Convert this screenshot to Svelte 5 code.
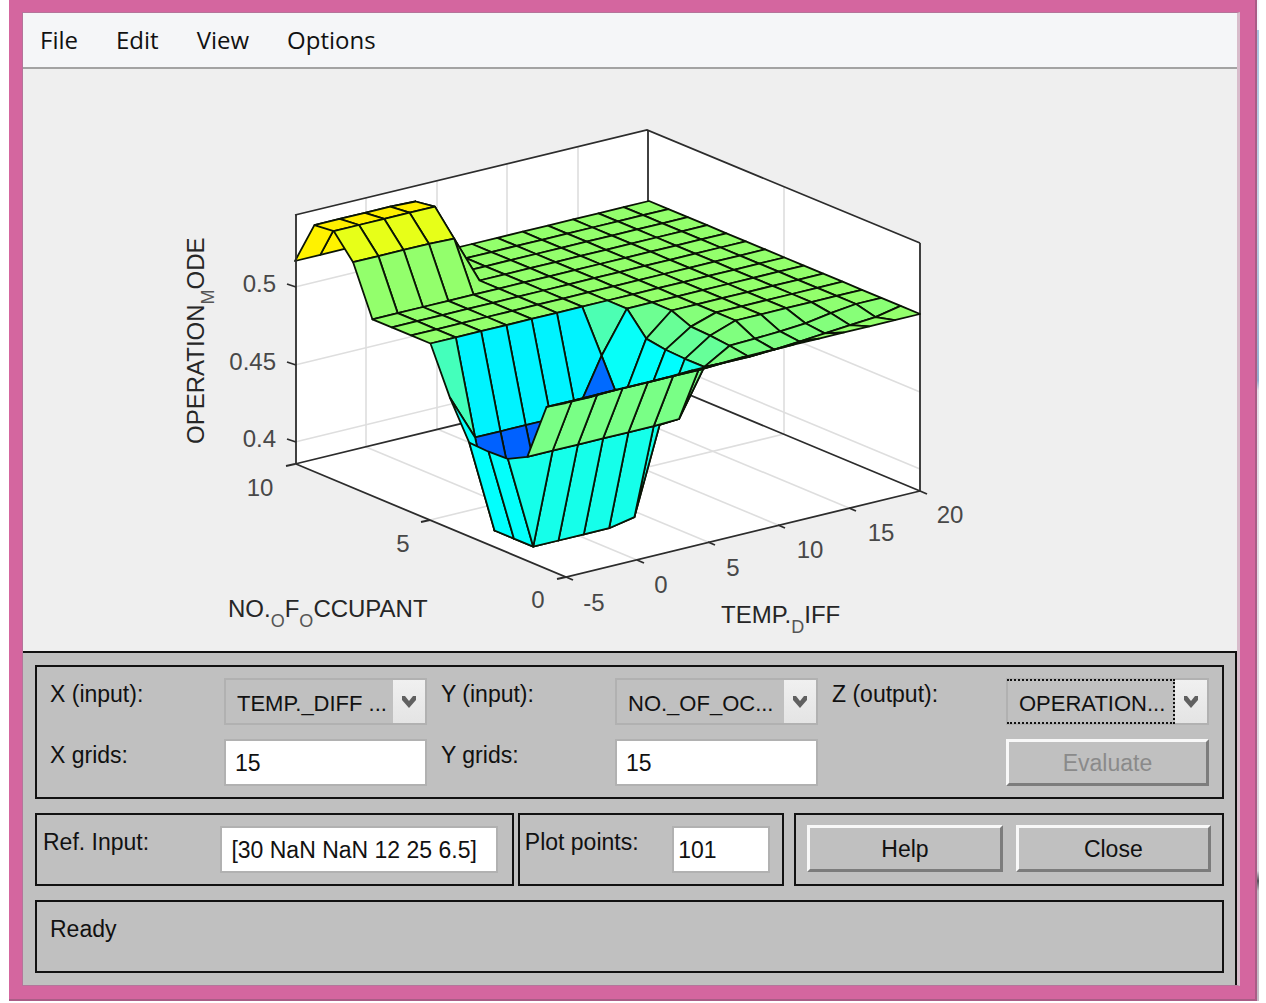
<script>
    // axes box corners in drawing units
    const front = [566, 578];
    const stepX = [354 / 14, -86 / 14];
    const stepY = [-271 / 14, -113 / 14];

    const flat = 177;
    const row = (start, rest = flat) =>
        Array.from({ length: 15 }, (_, j) => (j < start.length ? start[j] : rest));

    // surface heights, one row per occupant grid line, front to back
    const heights = [
        row([174, 174, 175, 175, 175, 176, 176]),
        row([162, 162, 162, 162, 162, 162, 162, 163, 163, 164, 166, 168, 170, 172]),
        row([104, 104, 104, 104, 104, 104, 105, 151, 166, 167, 168, 170, 174]),
        row([94, 0, 0, 0, 0, 5, 91, 151, 168]),
        row([93, 0, 0, 0, 0, 5, 93, 152, 169]),
        row([94, 0, 0, 0, 0, 5, 95, 155]),
        row([131, 85, 85, 85, 85, 85, 136]),
        row([]),
        row([]),
        row([]),
        row([]),
        row([226, 226, 226, 226, 225]),
        row([249, 249, 249, 249, 249]),
        row([247, 247, 247, 247, 246]),
        row([203, 203, 203, 203, 203]),
    ];

    function point(i, j) {
        const x = front[0] + stepX[0] * j + stepY[0] * i;
        const y = front[1] + stepX[1] * j + stepY[1] * i - heights[i][j];
        return `${x.toFixed(1)},${y.toFixed(1)}`;
    }

    function jet(h) {
        const v = 0.22 + 0.00169 * h;
        const channel = (c) =>
            Math.round(255 * Math.max(0, Math.min(1, 1.5 - Math.abs(4 * v - c))));
        return `rgb(${channel(3)}, ${channel(2)}, ${channel(1)})`;
    }

    // farthest faces first so the near ones cover them
    const faces = [];
    for (let depth = 26; depth >= 0; depth--) {
        for (let i = 13; i >= 0; i--) {
            const j = depth - i;
            if (j < 0 || j > 13) continue;
            faces.push({
                points: [point(i, j), point(i, j + 1), point(i + 1, j + 1), point(i + 1, j)].join(" "),
                fill: jet(heights[i][j]),
            });
        }
    }

    const xTicks = [
        { label: "-5", x: 566, y: 578, tx: 594, ty: 612 },
        { label: "0", x: 637, y: 561, tx: 661, ty: 594 },
        { label: "5", x: 708, y: 543, tx: 733, ty: 577 },
        { label: "10", x: 778, y: 526, tx: 810, ty: 559 },
        { label: "15", x: 849, y: 509, tx: 881, ty: 542 },
        { label: "20", x: 920, y: 492, tx: 950, ty: 524 },
    ];
    const yTicks = [
        { label: "0", x: 566, y: 578, tx: 538, ty: 609 },
        { label: "5", x: 430, y: 521, tx: 403, ty: 553 },
        { label: "10", x: 295, y: 465, tx: 260, ty: 497 },
    ];
    const zTicks = [
        { label: "0.4", y: 443 },
        { label: "0.45", y: 366 },
        { label: "0.5", y: 288 },
    ];

    const menus = ["File", "Edit", "View", "Options"];
    const chevron = "M1 1 H4 L8 6 L12 1 H15 V5 L8 13 L1 5 Z";

    let xGrids = "15";
    let yGrids = "15";
    let refInput = "[30 NaN NaN 12 25 6.5]";
    let plotPoints = "101";
</script>

<div class="window">
    <div class="client">
        <nav class="menubar">
            {#each menus as menu}
                <button class="menu">{menu}</button>
            {/each}
        </nav>

        <svg class="plot" viewBox="23 70 1214 582" role="img" aria-label="Surface plot">
            <polygon points="295,465 295,216 647,131 920,244 920,492 566,578" fill="#fff" />

            <g class="grid">
                {#each xTicks.slice(1, 5) as t}
                    <line x1={t.x} y1={t.y} x2={t.x - 271} y2={t.y - 113} />
                    <line x1={t.x - 271} y1={t.y - 113} x2={t.x - 271} y2={t.y - 362} />
                {/each}
                <line x1="430" y1="521" x2="784" y2="435" />
                <line x1="784" y1="435" x2="784" y2="188" />
                {#each zTicks as t}
                    <polyline points="295,{t.y} 649,{t.y - 86} 920,{t.y + 27}" />
                {/each}
            </g>

            <g class="edges">
                <polyline points="295,465 649,379 920,492" />
                <polyline points="295,216 647,131 920,244" />
                <line x1="648" y1="131" x2="648" y2="379" />
                <line x1="920" y1="244" x2="920" y2="492" />
            </g>

            <g class="surface">
                {#each faces as face}
                    <polygon points={face.points} fill={face.fill} />
                {/each}
            </g>

            <g class="edges">
                <polyline points="296,216 296,465 566,578 920,492" />
                {#each xTicks as t}
                    <line x1={t.x} y1={t.y} x2={t.x + 7} y2={t.y + 3} />
                {/each}
                {#each yTicks as t}
                    <line x1={t.x} y1={t.y} x2={t.x - 9} y2={t.y + 2} />
                {/each}
                {#each zTicks as t}
                    <line x1="296" y1={t.y} x2="287" y2={t.y - 3} />
                {/each}
            </g>

            <g class="ticks">
                {#each [...xTicks, ...yTicks] as t}
                    <text x={t.tx} y={t.ty} text-anchor="middle">{t.label}</text>
                {/each}
                {#each zTicks as t}
                    <text x="276" y={t.y + 5} text-anchor="end">{t.label}</text>
                {/each}
            </g>

            <g class="titles">
                <text x="228" y="618">NO.<tspan class="sub" dy="10">O</tspan><tspan dy="-10">F</tspan><tspan class="sub" dy="10">O</tspan><tspan dy="-10">CCUPANT</tspan></text>
                <text x="721" y="624">TEMP.<tspan class="sub" dy="10">D</tspan><tspan dy="-10">IFF</tspan></text>
                <text transform="translate(204 445) rotate(-90)">OPERATION<tspan class="sub" dy="10">M</tspan><tspan dy="-10">ODE</tspan></text>
            </g>
        </svg>

        <div class="panel">
            <section class="box inputs">
                <div class="pair">
                    <label for="x-input">X (input):</label>
                    <div class="dropdown">
                        <select id="x-input"><option>TEMP._DIFF ...</option></select>
                        <span class="arrow"><svg viewBox="0 0 16 14"><path d={chevron} /></svg></span>
                    </div>
                    <label for="x-grids">X grids:</label>
                    <input id="x-grids" bind:value={xGrids} />
                </div>
                <div class="pair">
                    <label for="y-input">Y (input):</label>
                    <div class="dropdown">
                        <select id="y-input"><option>NO._OF_OC...</option></select>
                        <span class="arrow"><svg viewBox="0 0 16 14"><path d={chevron} /></svg></span>
                    </div>
                    <label for="y-grids">Y grids:</label>
                    <input id="y-grids" bind:value={yGrids} />
                </div>
                <div class="pair">
                    <label for="z-output">Z (output):</label>
                    <div class="dropdown focused">
                        <select id="z-output"><option>OPERATION...</option></select>
                        <span class="arrow"><svg viewBox="0 0 16 14"><path d={chevron} /></svg></span>
                    </div>
                    <button class="push evaluate" disabled>Evaluate</button>
                </div>
            </section>

            <div class="middle">
                <section class="box ref">
                    <label for="ref">Ref. Input:</label>
                    <input id="ref" bind:value={refInput} />
                </section>
                <section class="box points">
                    <label for="points">Plot points:</label>
                    <input id="points" bind:value={plotPoints} />
                </section>
                <section class="box actions">
                    <button class="push">Help</button>
                    <button class="push">Close</button>
                </section>
            </div>

            <section class="box status">Ready</section>
        </div>
    </div>
</div>

<style>
    :global(body) {
        margin: 0;
        background: #fff;
    }

    .window {
        position: relative;
        margin: 0 9px 0 9px;
        padding: 12px 15px 13px 13px;
        background: #d4669f;
        border-right: 2px solid #a95d86;
        border-bottom: 2px solid #a95d86;
        font-family: "Liberation Sans", Arial, sans-serif;
        font-size: 23px;
        color: #111;
    }

    /* sliver of the desktop showing past the window edge */
    .window::after {
        content: "";
        position: absolute;
        top: 0;
        right: -4px;
        bottom: -2px;
        width: 2px;
        background: linear-gradient(#f4f4fa 3%, #a9c4e2 3%, #c5d3e6 20%, #93aed2 38%, #e6dde8 39%, #ddd5e0 87%, #55505a 88%, #c4bcc6 89%);
    }

    .client {
        border: 1px solid #b5749a;
        border-right: 3px solid #d8bccb;
        background: #efefef;
    }

    .menubar {
        display: flex;
        gap: 38px;
        height: 54px;
        padding: 0 17px;
        align-items: center;
        background: #f5f6f8;
        border-bottom: 2px solid #a3a3a3;
    }

    .menu {
        padding: 0;
        border: none;
        background: none;
        color: #111;
        font-family: "Open Sans", "Noto Sans", sans-serif;
        font-size: 24px;
        line-height: 32px;
    }

    .plot {
        display: block;
        width: 100%;
        height: auto;
    }

    .grid line,
    .grid polyline {
        fill: none;
        stroke: #dedede;
        stroke-width: 1.6;
    }

    .edges line,
    .edges polyline {
        fill: none;
        stroke: #2c2c2c;
        stroke-width: 1.8;
    }

    .surface polygon {
        stroke: #0a1405;
        stroke-width: 1.8;
        stroke-linejoin: round;
    }

    .ticks text,
    .titles text {
        font-size: 24px;
        fill: #484848;
    }

    .titles text {
        fill: #262626;
    }

    .titles .sub {
        font-size: 18px;
        fill: #555;
    }

    .panel {
        display: flex;
        flex-direction: column;
        gap: 14px;
        padding: 12px 11px 12px 12px;
        background: #c0c0c0;
        border-top: 2px solid #111;
        border-right: 2px solid #111;
    }

    .box {
        box-sizing: border-box;
        border: 2px solid #111;
    }

    .inputs {
        display: flex;
        gap: 14px;
        padding: 11px 13px;
    }

    .pair {
        flex: 1;
        display: grid;
        grid-template-columns: 174fr 203fr;
        grid-template-rows: 47px 47px;
        row-gap: 14px;
    }

    label {
        line-height: 32px;
        white-space: nowrap;
    }

    input,
    select {
        box-sizing: border-box;
        width: 100%;
        min-width: 0;
        height: 47px;
        margin: 0;
        border: 2px solid #b1b1b1;
        border-radius: 0;
        outline: none;
        font-family: inherit;
        color: #111;
    }

    input {
        padding: 2px 9px 0;
        background: #fff;
        font-size: 23px;
    }

    .dropdown {
        position: relative;
    }

    select {
        appearance: none;
        padding: 4px 34px 0 11px;
        background: #c0c0c0;
        font-size: 22px;
    }

    .arrow {
        position: absolute;
        top: 2px;
        right: 2px;
        bottom: 2px;
        width: 32px;
        display: flex;
        align-items: center;
        justify-content: center;
        background: linear-gradient(#f0f0f0, #e4e4e4);
        pointer-events: none;
    }

    .arrow svg {
        width: 16px;
        height: 14px;
        fill: #606060;
    }

    .focused::after {
        content: "";
        position: absolute;
        inset: 1px 34px 1px 1px;
        border: 2px dotted #111;
        border-left-width: 0;
        pointer-events: none;
    }

    .push {
        box-sizing: border-box;
        height: 47px;
        padding: 2px 0 0;
        border: 3px solid;
        border-color: #f8f8f8 #7c7c7c #7c7c7c #f8f8f8;
        background: #c0c0c0;
        font-family: inherit;
        font-size: 23px;
        color: #111;
    }

    .evaluate {
        grid-column: 2;
    }

    .push:disabled {
        color: #8a8a8a;
    }

    .middle {
        display: grid;
        grid-template-columns: 482fr 276fr 429fr;
    }

    .middle .box {
        display: flex;
        height: 73px;
        padding: 11px 14px 0 6px;
        justify-content: space-between;
    }

    .middle .ref {
        margin-right: 4px;
    }

    .middle .points {
        padding-right: 12px;
        padding-left: 5px;
        margin-right: 10px;
    }

    .middle .actions {
        gap: 13px;
        padding: 10px 11px 0;
    }

    .ref input {
        width: 61%;
    }

    .points input {
        width: 98px;
        padding: 2px 4px 0;
    }

    .actions .push {
        flex: 1;
    }

    .status {
        height: 73px;
        padding: 11px 13px;
        line-height: 32px;
    }
</style>
